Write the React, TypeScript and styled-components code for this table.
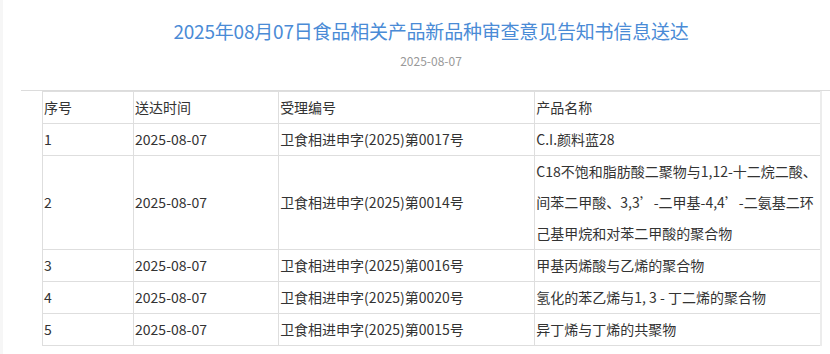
import styled, {createGlobalStyle} from "styled-components";

const GlobalStyle = createGlobalStyle`
  html, body {
    margin: 0;
    padding: 0;
    background: #f6f6f6;
  }
  body {
    font-family: "Noto Sans CJK SC", "Noto Sans", sans-serif;
    color: #333;
  }
`

type Row = {
  no: string
  date: string
  code: string
  name: string
}

const rows: Row[] = [
  {no: '1', date: '2025-08-07', code: '卫食相进申字(2025)第0017号', name: 'C.I.颜料蓝28'},
  {
    no: '2',
    date: '2025-08-07',
    code: '卫食相进申字(2025)第0014号',
    name: 'C18不饱和脂肪酸二聚物与1,12-十二烷二酸、间苯二甲酸、3,3’-二甲基-4,4’-二氨基二环己基甲烷和对苯二甲酸的聚合物',
  },
  {no: '3', date: '2025-08-07', code: '卫食相进申字(2025)第0016号', name: '甲基丙烯酸与乙烯的聚合物'},
  {no: '4', date: '2025-08-07', code: '卫食相进申字(2025)第0020号', name: '氢化的苯乙烯与1, 3 - 丁二烯的聚合物'},
  {no: '5', date: '2025-08-07', code: '卫食相进申字(2025)第0015号', name: '异丁烯与丁烯的共聚物'},
]

const App = () => {
  return (
    <>
      <GlobalStyle/>
      <Page>
        <Heading>
          <Title>2025年08月07日食品相关产品新品种审查意见告知书信息送达</Title>
          <PubDate>2025-08-07</PubDate>
        </Heading>

        <Article>
          <Table>
            <colgroup>
              <col style={{width: 91}}/>
              <col style={{width: 145}}/>
              <col style={{width: 256}}/>
              <col style={{width: 286}}/>
            </colgroup>
            <thead>
              <tr>
                <Cell as='th'>序号</Cell>
                <Cell as='th'>送达时间</Cell>
                <Cell as='th'>受理编号</Cell>
                <Cell as='th'>产品名称</Cell>
              </tr>
            </thead>
            <tbody>
              {rows.map(row => (
                <tr key={row.no}>
                  <Cell>{row.no}</Cell>
                  <Cell>{row.date}</Cell>
                  <Cell>{row.code}</Cell>
                  <Cell>{row.name}</Cell>
                </tr>
              ))}
            </tbody>
          </Table>
        </Article>
      </Page>
    </>
  );
};

const Page = styled.div`
  margin-left: 3px;
  min-height: 354px;
  background: #fff;
  padding-top: 17px;
  box-sizing: border-box;
`

const Heading = styled.div`
  padding-left: 29px;
`

const Title = styled.h1`
  margin: 0;
  text-align: center;
  font-size: 19px;
  line-height: 28px;
  font-weight: normal;
  color: #4a8bd6;
  letter-spacing: -0.2px;
`

const PubDate = styled.div`
  margin-top: 8px;
  text-align: center;
  font-size: 12px;
  line-height: 16px;
  color: #999;
`

const Article = styled.div`
  margin-top: 21px;
  margin-left: 18px;
  border-top: 1px solid #dcdcdc;
  padding-left: 21px;
`

const Table = styled.table`
  border-collapse: collapse;
  table-layout: fixed;
  width: 780px;
  border-right: 2px solid #ececec;
  border-bottom: 1px solid #e6e6e6;
`

const Cell = styled.td`
  border: 1px solid #dedede;
  padding: 0 1px;
  font-size: 14px;
  line-height: 31px;
  font-weight: normal;
  text-align: left;
  vertical-align: middle;
  color: #333;
  word-break: break-all;
`

export default App;
